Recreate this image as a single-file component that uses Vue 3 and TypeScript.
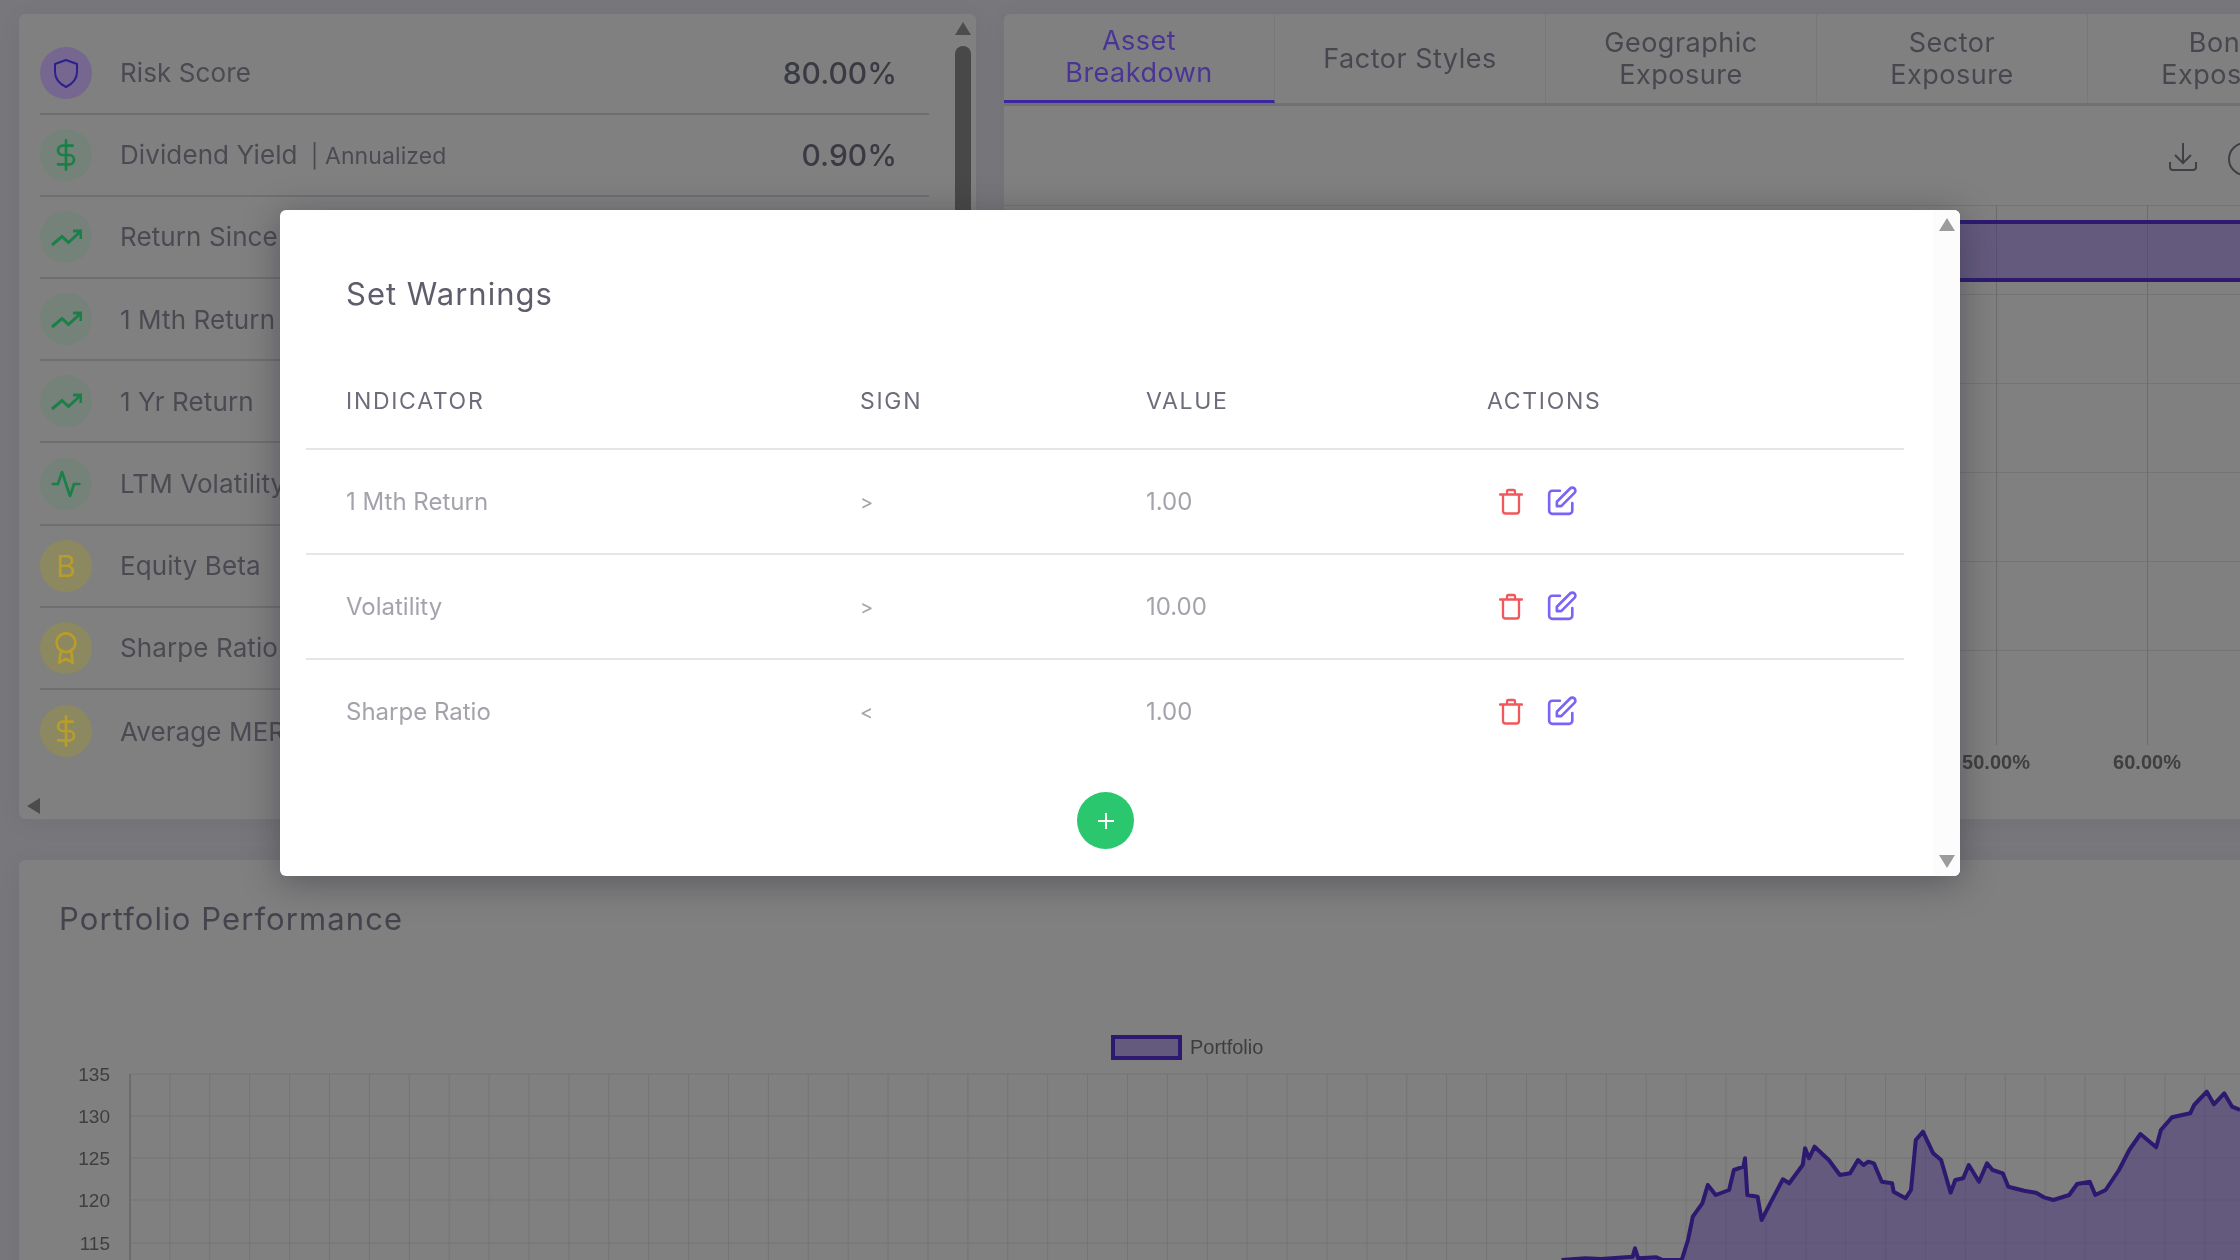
<script setup lang="ts">
interface Metric {
  label: string
  note?: string
  value?: string
  tone: 'purple' | 'green' | 'yellow'
  icon: 'shield' | 'dollar' | 'trend' | 'pulse' | 'beta' | 'award'
}

const metrics: Metric[] = [
  { label: 'Risk Score', value: '80.00%', tone: 'purple', icon: 'shield' },
  { label: 'Dividend Yield', note: '| Annualized', value: '0.90%', tone: 'green', icon: 'dollar' },
  { label: 'Return Since Inception', tone: 'green', icon: 'trend' },
  { label: '1 Mth Return', tone: 'green', icon: 'trend' },
  { label: '1 Yr Return', tone: 'green', icon: 'trend' },
  { label: 'LTM Volatility', tone: 'green', icon: 'pulse' },
  { label: 'Equity Beta', tone: 'yellow', icon: 'beta' },
  { label: 'Sharpe Ratio', tone: 'yellow', icon: 'award' },
  { label: 'Average MER', tone: 'yellow', icon: 'dollar' },
]

const tabs = ['Asset Breakdown', 'Factor Styles', 'Geographic Exposure', 'Sector Exposure', 'Bond Exposure']

const warnings = [
  { indicator: '1 Mth Return', sign: '>', value: '1.00' },
  { indicator: 'Volatility', sign: '>', value: '10.00' },
  { indicator: 'Sharpe Ratio', sign: '<', value: '1.00' },
]

// traced from the reference, in chart svg pixels
const raw: [number, number][] = [
  [710, 1500], [740, 1495], [760, 1497], [800, 1490], [803, 1465], [807, 1495], [830, 1492], [838, 1500], [862, 1500],
  [870, 1440], [876, 1370], [888, 1330], [895, 1275], [905, 1305], [922, 1290], [928, 1230], [940, 1220], [942, 1195],
  [945, 1305], [958, 1310], [963, 1380], [975, 1325], [990, 1258], [998, 1270], [1015, 1215], [1018, 1165], [1023, 1195],
  [1030, 1160], [1048, 1200], [1062, 1245], [1075, 1240], [1085, 1200], [1092, 1215], [1098, 1205], [1105, 1210],
  [1115, 1265], [1128, 1270], [1130, 1295], [1145, 1315], [1152, 1290], [1158, 1140], [1167, 1115], [1180, 1180],
  [1190, 1200], [1202, 1298], [1208, 1260], [1218, 1255], [1225, 1215], [1238, 1265], [1248, 1210], [1255, 1230],
  [1268, 1240], [1275, 1280], [1295, 1292], [1310, 1298], [1320, 1312], [1332, 1320], [1352, 1305], [1362, 1272],
  [1378, 1265], [1385, 1305], [1398, 1290], [1415, 1230], [1428, 1170], [1442, 1122], [1462, 1162], [1468, 1110],
  [1482, 1072], [1505, 1060], [1510, 1035], [1526, 995], [1535, 1033], [1548, 1000], [1558, 1040], [1568, 1050],
]

// svg origin is x=19, y=1000 on the page
const points = raw.map(([x, y]) => `${(1000 + x / 1.2645 - 19).toFixed(1)},${(760 + y / 3 - 1000).toFixed(1)}`)
const linePath = 'M' + points.join('L')
const areaPath = linePath + 'L2221,262L1580,262Z'

const chartTicks = [
  { label: '135', y: 74 },
  { label: '130', y: 116 },
  { label: '125', y: 158 },
  { label: '120', y: 200 },
  { label: '115', y: 243 },
]
const chartColumns = Array.from({ length: 53 }, (_, i) => 111 + i * 39.9)
</script>

<template>
  <div class="page">
    <div class="top-row">
      <section class="card metrics-card">
        <div class="metrics-list">
          <div v-for="m in metrics" :key="m.label + m.icon" class="metric">
            <span class="metric-icon" :class="m.tone">
              <svg v-if="m.icon === 'shield'" viewBox="0 0 32 32"><path d="M16 30c-6-3-11-8-11-15V7l11-4 11 4v8c0 7-5 12-11 15z" /></svg>
              <svg v-else-if="m.icon === 'dollar'" viewBox="0 0 24 24"><path d="M12 1v22M17 5H9.500a3.500 3.500 0 0 0 0 7h5a3.500 3.500 0 0 1 0 7H6" /></svg>
              <svg v-else-if="m.icon === 'trend'" class="trend" viewBox="0 0 32 32"><path d="M2 24l10-8.500 6.500 6L31 10M23 10h8v8" /></svg>
              <svg v-else-if="m.icon === 'pulse'" viewBox="0 0 24 24"><path d="M2 12h4l3-9 6 18 3-9h4" /></svg>
              <span v-else-if="m.icon === 'beta'" class="beta">B</span>
              <svg v-else viewBox="0 0 24 24"><circle cx="12" cy="8" r="7" /><path d="M8.210 13.890L7 23l5-3 5 3-1.210-9.120" /></svg>
            </span>
            <span class="metric-label">{{ m.label }}<small v-if="m.note">{{ m.note }}</small></span>
            <span class="metric-value">{{ m.value }}</span>
          </div>
        </div>
        <div class="metrics-v-scroll">
          <span class="arrow-up"></span>
          <span class="v-thumb"></span>
        </div>
        <span class="arrow-left"></span>
      </section>

      <section class="card breakdown-card">
        <div class="tabs">
          <div v-for="(t, i) in tabs" :key="t" class="tab" :class="{ active: i === 0 }"><span>{{ t }}</span></div>
        </div>
        <div class="tools">
          <svg class="tool" viewBox="0 0 30 30"><path d="M15 1v19M7 13l8 8 8-8M2 20v5a3 3 0 0 0 3 3h20a3 3 0 0 0 3-3v-5" /></svg>
          <span class="tool-circle"></span>
        </div>
        <div class="bar-chart">
          <div class="h-grid">
            <i v-for="n in 6" :key="n"></i>
          </div>
          <i class="v-line first"></i>
          <i class="v-line second"></i>
          <div class="bar"></div>
          <span class="x-label first">50.00%</span>
          <span class="x-label second">60.00%</span>
        </div>
      </section>
    </div>

    <section class="card performance-card">
      <h2>Portfolio Performance</h2>
      <div class="legend"><i></i><span>Portfolio</span></div>
      <svg class="line-chart" width="2221" height="262" viewBox="0 0 2221 262">
        <g class="grid">
          <line v-for="c in chartColumns" :key="c" :x1="c" y1="74" :x2="c" y2="262" />
          <line v-for="t in chartTicks" :key="t.label" x1="111" :y1="t.y" x2="2221" :y2="t.y" />
        </g>
        <line class="axis" x1="111" y1="74" x2="111" y2="262" />
        <text v-for="t in chartTicks" :key="t.label" class="tick" x="91" :y="t.y + 7" text-anchor="end">{{ t.label }}</text>
        <path class="area" :d="areaPath" />
        <path class="line" :d="linePath" />
      </svg>
    </section>

    <div class="modal">
      <h3>Set Warnings</h3>
      <table>
        <thead>
          <tr>
            <th class="c1">INDICATOR</th>
            <th class="c2">SIGN</th>
            <th class="c3">VALUE</th>
            <th>ACTIONS</th>
          </tr>
        </thead>
        <tbody>
          <tr v-for="w in warnings" :key="w.indicator">
            <td>{{ w.indicator }}</td>
            <td class="sign">{{ w.sign }}</td>
            <td>{{ w.value }}</td>
            <td>
              <div class="actions">
                <svg class="trash" viewBox="0 0 24 27"><path d="M1 6.500h22M8 6V3.500A1.500 1.500 0 0 1 9.500 2h5A1.500 1.500 0 0 1 16 3.500V6M4 6.500V23a2.500 2.500 0 0 0 2.500 2.500h11A2.500 2.500 0 0 0 20 23V6.500" /></svg>
                <svg class="edit" viewBox="0 0 24 24"><path d="M11 5H6a2 2 0 0 0-2 2v11a2 2 0 0 0 2 2h11a2 2 0 0 0 2-2v-5m-1.414-9.414a2 2 0 1 1 2.828 2.828L11.828 15H9v-2.828l8.586-8.586z" /></svg>
              </div>
            </td>
          </tr>
        </tbody>
      </table>
      <button class="add" type="button">
        <svg viewBox="0 0 20 20"><path d="M10 2v16M2 10h16" /></svg>
      </button>
      <div class="modal-scroll">
        <span class="arrow-up"></span>
        <span class="arrow-down"></span>
      </div>
    </div>
  </div>
</template>

<style>
html,
body {
  margin: 0;
  background: #78787c;
}
</style>

<style scoped>
/* colours behind the modal are the dimmed values as they appear on screen */
.page {
  position: relative;
  width: 2240px;
  height: 1260px;
  overflow: hidden;
  box-sizing: border-box;
  padding: 14px 0 0 19px;
  background: #78787c;
  font-family: Inter, "Open Sans", sans-serif;
  color: #44444e;
  filter: blur(0.5px);
}

.top-row {
  display: flex;
  gap: 28px;
  height: 805px;
  width: 2300px;
}

.card {
  position: relative;
  background: #808080;
  border-radius: 6px;
  box-shadow: 0 4px 24px rgba(20, 20, 30, 0.06);
}

.metrics-card {
  width: 957px;
  flex: none;
  padding: 0 47px 0 21px;
  box-sizing: border-box;
}

.metric {
  display: flex;
  align-items: center;
  height: 82.200px;
  box-sizing: border-box;
  border-bottom: 2px solid #6f6f72;
  position: relative;
  top: 18.500px;
}

.metric:last-child {
  border-bottom: none;
}

.metric-icon {
  width: 52px;
  height: 52px;
  border-radius: 50%;
  display: flex;
  align-items: center;
  justify-content: center;
  flex: none;
  margin-right: 28px;
}

.metric-icon svg {
  width: 32px;
  height: 32px;
  fill: none;
  stroke: currentColor;
  stroke-width: 2;
  stroke-linecap: round;
  stroke-linejoin: round;
}

.metric-icon svg.trend {
  stroke-width: 3;
  stroke-linecap: butt;
  stroke-linejoin: miter;
}

.metric-icon.purple {
  background: #75678f;
  color: #2e1f8e;
}

.metric-icon.green {
  background: #74827a;
  color: #1a8048;
}

.metric-icon.yellow {
  background: #8c8860;
  color: #b99d2a;
}

.beta {
  font-size: 30px;
  font-weight: 400;
}

.metric-label {
  flex: 1;
  font-size: 26px;
  letter-spacing: 0.1px;
  white-space: nowrap;
  color: #4a4a52;
}

.metric-label small {
  font-size: 23px;
  margin-left: 13px;
}

.metric-value {
  font-size: 30px;
  font-weight: 500;
  color: #3a3a44;
  margin-right: 32px;
}

.metrics-v-scroll {
  position: absolute;
  top: 8px;
  right: 5px;
  width: 16px;
  height: 240px;
}

.arrow-up,
.arrow-down {
  display: block;
  width: 0;
  height: 0;
  border-left: 8px solid transparent;
  border-right: 8px solid transparent;
}

.metrics-v-scroll .arrow-up {
  border-bottom: 13px solid #4c4c4c;
}

.v-thumb {
  display: block;
  margin-top: 11px;
  width: 16px;
  height: 300px;
  border-radius: 8px;
  background: #484848;
}

.arrow-left {
  position: absolute;
  left: 8px;
  bottom: 5px;
  width: 0;
  height: 0;
  border-top: 8px solid transparent;
  border-bottom: 8px solid transparent;
  border-right: 13px solid #4c4c4c;
}

.breakdown-card {
  width: 1300px;
  flex: none;
}

.tabs {
  display: flex;
  height: 89px;
  border-bottom: 3px solid #717171;
}

.tab {
  width: 271px;
  flex: none;
  box-sizing: border-box;
  border-right: 1px solid #787878;
  height: 89px;
  display: flex;
  align-items: center;
  justify-content: center;
  padding: 0 40px;
  text-align: center;
  font-size: 27px;
  letter-spacing: 0.5px;
  line-height: 32px;
  color: #47474f;
  position: relative;
}

.tab.active {
  color: #4a3596;
  border-bottom: 3px solid #3d25a0;
}

.tools {
  display: flex;
  gap: 29px;
  padding: 36px 0 0 1163px;
  height: 63px;
}

.tool {
  width: 32px;
  height: 30px;
  fill: none;
  stroke: #3f3f45;
  stroke-width: 2;
  flex: none;
}

.tool-circle {
  flex: none;
  width: 30px;
  height: 30px;
  border: 2px solid #3f3f45;
  border-radius: 50%;
}

.bar-chart {
  position: relative;
  height: 600px;
}

.h-grid {
  display: flex;
  flex-direction: column;
  gap: 88px;
}

.h-grid i {
  display: block;
  height: 1px;
  background: #747474;
}

.v-line {
  position: absolute;
  top: 0;
  height: 540px;
  width: 1px;
  background: #6c6c6c;
}

.v-line.first {
  left: 992px;
}

.v-line.second {
  left: 1143px;
}

.bar {
  position: absolute;
  top: 15px;
  left: 0;
  right: 0;
  height: 62px;
  box-sizing: border-box;
  background: rgba(70, 52, 122, 0.5);
  border-top: 4px solid #2d1a70;
  border-bottom: 4px solid #2d1a70;
}

.x-label {
  position: absolute;
  top: 546px;
  font-size: 20px;
  font-weight: 700;
  font-family: "Liberation Sans", Arial, sans-serif;
  color: #3f3f3f;
  transform: translateX(-50%);
}

.x-label.first {
  left: 992px;
}

.x-label.second {
  left: 1143px;
}

.performance-card {
  margin-top: 41px;
  width: 2300px;
  height: 500px;
  box-sizing: border-box;
  padding-top: 40px;
}

.performance-card h2 {
  margin: 0 0 0 40px;
  font-size: 31px;
  letter-spacing: 1.100px;
  line-height: 38px;
  font-weight: 400;
  color: #44444e;
}

.legend {
  position: absolute;
  left: 1092px;
  top: 175px;
  display: flex;
  align-items: center;
  gap: 8px;
  font-family: "Liberation Sans", Arial, sans-serif;
  font-size: 20px;
  color: #3d3d3d;
}

.legend i {
  display: block;
  width: 71px;
  height: 25px;
  box-sizing: border-box;
  border: 4px solid #2d1a70;
  background: rgba(70, 52, 122, 0.5);
}

.line-chart {
  position: absolute;
  left: 0;
  top: 140px;
}

.grid line {
  stroke: #747474;
  stroke-width: 1;
}

.axis {
  stroke: #5f5f5f;
  stroke-width: 1;
}

.tick {
  font-family: "Liberation Sans", Arial, sans-serif;
  font-size: 19px;
  fill: #3e3e3e;
}

.area {
  fill: rgba(70, 52, 122, 0.5);
}

.line {
  fill: none;
  stroke: #2d1a70;
  stroke-width: 4;
  stroke-linejoin: round;
}

/* the dialog lies over the dimmed dashboard */
.modal {
  position: absolute;
  left: 280px;
  top: 210px;
  width: 1680px;
  height: 666px;
  box-sizing: border-box;
  background: #fff;
  border-radius: 6px;
  padding: 0 56px 0 26px;
  box-shadow: 0 6px 36px rgba(30, 30, 45, 0.4);
}

.modal h3 {
  margin: 0;
  padding: 65px 0 0 40px;
  height: 81px;
  font-size: 31px;
  letter-spacing: 1px;
  line-height: 38px;
  font-weight: 400;
  color: #5f5d6c;
}

table {
  width: 1598px;
  border-collapse: collapse;
  table-layout: fixed;
}

th {
  height: 90px;
  padding: 0 0 2px 40px;
  text-align: left;
  font-size: 23px;
  font-weight: 400;
  letter-spacing: 1.700px;
  color: #6e6b7b;
  border-bottom: 2px solid #e6e6e8;
}

th.c1 {
  width: 474px;
}

th.c2 {
  width: 246px;
}

th.c3 {
  width: 301px;
}

td {
  height: 103px;
  padding: 0 0 0 40px;
  font-size: 24px;
  color: #a3a3ab;
  border-bottom: 2px solid #e6e6e8;
}

td.sign {
  font-size: 20px;
}

tr:last-child td {
  border-bottom: none;
}

.actions {
  display: flex;
  gap: 20px;
  align-items: center;
  padding-left: 12px;
}

.trash {
  width: 24px;
  height: 27px;
  fill: none;
  stroke: #f0585c;
  stroke-width: 2.300;
  stroke-linejoin: round;
  stroke-linecap: round;
}

.edit {
  width: 37px;
  height: 37px;
  fill: none;
  stroke: #7c63f5;
  stroke-width: 1.700;
  stroke-linejoin: round;
  stroke-linecap: round;
}

.add {
  position: absolute;
  left: 797px;
  top: 582px;
  width: 57px;
  height: 57px;
  padding: 0;
  border: none;
  border-radius: 50%;
  background: #2ac76e;
  display: flex;
  align-items: center;
  justify-content: center;
}

.add svg {
  width: 20px;
  height: 20px;
  stroke: #fff;
  stroke-width: 2;
  fill: none;
}

.modal-scroll {
  position: absolute;
  top: 0;
  right: 0;
  bottom: 0;
  width: 27px;
  background: #fcfcfc;
  border-radius: 0 6px 6px 0;
  box-sizing: border-box;
  padding: 8px 6px;
  display: flex;
  flex-direction: column;
  justify-content: space-between;
}

.modal-scroll .arrow-up {
  border-bottom: 13px solid #9c9c9c;
}

.modal-scroll .arrow-down {
  border-top: 13px solid #9c9c9c;
}
</style>
